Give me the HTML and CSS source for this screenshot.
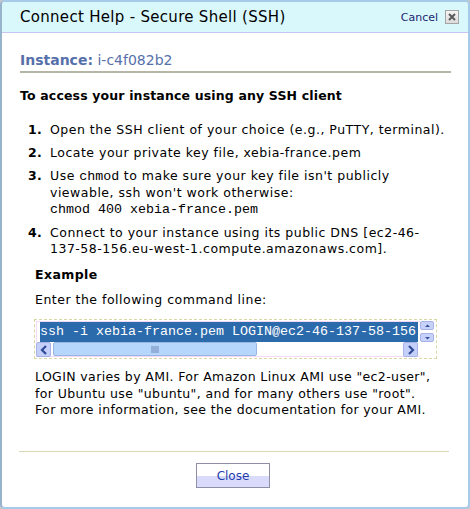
FILE: index.html
```html
<!DOCTYPE html>
<html>
<head>
<meta charset="utf-8">
<link rel="stylesheet" href="styles.css">
</head>
<body>
<div class="dialog">
  <div class="header">
    <h1 class="title">Connect Help - Secure Shell (SSH)</h1>
    <div class="cancel">
      <span class="cancel-text">Cancel</span>
      <span class="xbox"><svg width="10" height="10" viewBox="0 0 10 10"><path d="M2 2 L8 8 M8 2 L2 8" stroke="#5a5a5a" stroke-width="2" fill="none"/></svg></span>
    </div>
  </div>
  <div class="content">
    <div class="instance"><b>Instance:</b> i-c4f082b2</div>
    <h2 class="heading">To access your instance using any SSH client</h2>
    <ol class="steps">
      <li class="step"><span class="num">1.</span><span class="txt">Open the SSH client of your choice (e.g., PuTTY, terminal).</span></li>
      <li class="step"><span class="num">2.</span><span class="txt">Locate your private key file, xebia-france.pem</span></li>
      <li class="step"><span class="num">3.</span><span class="txt">Use <code>chmod</code> to make sure your key file isn't publicly<br>viewable, ssh won't work otherwise:<br><code>chmod 400 xebia-france.pem</code></span></li>
      <li class="step"><span class="num">4.</span><span class="txt">Connect to your instance using its public DNS [ec2-46-<br>137-58-156.eu-west-1.compute.amazonaws.com].</span></li>
    </ol>
    <div class="example">
      <h3 class="ex-title">Example</h3>
      <p class="ex-line">Enter the following command line:</p>
      <div class="cmd">
        <div class="cmd-grid">
          <div class="cmd-text"><span class="sel">ssh -i xebia-france.pem LOGIN@ec2-46-137-58-156</span></div>
          <div class="vscroll">
            <span class="vbtn"><svg width="7" height="4" viewBox="0 0 7 4"><path d="M1 3 L3.5 0.5 L6 3" fill="#3a4f9a"/></svg></span>
            <span class="vbtn"><svg width="7" height="4" viewBox="0 0 7 4"><path d="M1 1 L3.5 3.5 L6 1" fill="#3a4f9a"/></svg></span>
          </div>
          <div class="hscroll">
            <span class="hbtn"><svg width="8" height="10" viewBox="0 0 8 10"><path d="M6 1 L2 5 L6 9" stroke="#2f4b96" stroke-width="2.2" fill="none"/></svg></span>
            <span class="thumb"><svg width="9" height="7" viewBox="0 0 9 7"><path d="M1 0V7M3 0V7M5 0V7M7 0V7" stroke="#7088b8" stroke-width="1"/></svg></span>
            <span class="track"></span>
            <span class="hbtn"><svg width="8" height="10" viewBox="0 0 8 10"><path d="M2 1 L6 5 L2 9" stroke="#2f4b96" stroke-width="2.2" fill="none"/></svg></span>
          </div>
        </div>
      </div>
      <p class="note">LOGIN varies by AMI. For Amazon Linux AMI use "ec2-user",<br>for Ubuntu use "ubuntu", and for many others use "root".<br>For more information, see the documentation for your AMI.</p>
    </div>
  </div>
  <div class="footer">
    <button class="close-btn">Close</button>
  </div>
</div>
</body>
</html>
```

FILE: styles.css
```css
html, body {
  margin: 0;
  padding: 0;
  background: #c4c8cc;
}
body {
  font-family: "DejaVu Sans", Verdana, sans-serif;
  color: #000;
}
.dialog {
  width: 470px;
  height: 509px;
  box-sizing: border-box;
  border: 2px solid #a6cbe8;
  border-left-color: #98b4cc;
  border-radius: 5px;
  background: #fff;
  display: flex;
  flex-direction: column;
  overflow: hidden;
}
.header {
  height: 30px;
  flex: none;
  background: #d9f8fc;
  border-bottom: 1px solid #c6c6f2;
  display: flex;
  align-items: center;
  justify-content: space-between;
  padding: 0 9px 0 18px;
}
.title {
  margin: 0;
  font-size: 15px;
  font-weight: normal;
  line-height: 18px;
  letter-spacing: 0.3px;
}
.cancel {
  display: flex;
  align-items: center;
  gap: 7px;
}
.cancel-text {
  font-size: 11px;
  color: #1a2670;
  letter-spacing: 0;
}
.xbox {
  width: 12px;
  height: 12px;
  border: 1px solid #a4a4a4;
  background: linear-gradient(#f4f4f4, #dcdcdc);
  display: flex;
  align-items: center;
  justify-content: center;
}
.content {
  padding: 0 17px 0 18px;
}
.instance {
  margin-top: 18px;
  font-size: 14px;
  line-height: 18px;
  color: #5670aa;
  padding-bottom: 2px;
  border-bottom: 2px solid #b6b6a8;
}
.heading {
  margin: 15px 0 0;
  font-size: 12.5px;
  font-weight: bold;
  line-height: 16px;
  letter-spacing: 0.15px;
}
.steps {
  list-style: none;
  margin: 18px 0 0;
  padding: 0;
  font-size: 12.5px;
  line-height: 16px;
  letter-spacing: 0.5px;
}
.step {
  display: flex;
  margin-bottom: 7px;
}
.num {
  width: 22px;
  padding-left: 8px;
  flex: none;
  font-weight: bold;
  letter-spacing: 0.2px;
}
code {
  font-family: "Liberation Mono", "Courier New", monospace;
  font-size: 13.33px;
  letter-spacing: 0;
}
.example {
  padding-left: 15px;
  font-size: 12.5px;
  line-height: 16px;
  letter-spacing: 0.5px;
}
.ex-title {
  margin: 10px 0 0;
  font-size: 12.5px;
  font-weight: bold;
  line-height: 16px;
  letter-spacing: 0.4px;
}
.ex-line {
  margin: 9px 0 0;
}
.cmd {
  margin: 11px 0 0 -1px;
  width: 403px;
  height: 40px;
  box-sizing: border-box;
  border: 1px dashed #d8d8a4;
  padding: 1px;
  letter-spacing: 0;
}
.cmd-grid {
  display: grid;
  grid-template-columns: 384px 14px;
  grid-template-rows: 21px 15px;
}
.cmd-text {
  white-space: nowrap;
  overflow: hidden;
  border-top: 1px solid #f4d8f4;
  border-left: 1px solid #f4d8f4;
  box-sizing: border-box;
  padding-left: 3px;
}
.sel {
  display: inline-block;
  background: #2b6aab;
  color: #fff;
  font-family: "Liberation Mono", "Courier New", monospace;
  font-size: 13.33px;
  line-height: 20px;
  padding-right: 2px;
}
.vscroll {
  display: flex;
  flex-direction: column;
  gap: 3px;
}
.vbtn {
  width: 12px;
  height: 7px;
  border: 1px solid #a8b2e6;
  border-radius: 2px;
  background: #c6d2fa;
  display: flex;
  align-items: center;
  justify-content: center;
}
.hscroll {
  display: flex;
  align-items: stretch;
  padding-right: 2px;
  border-bottom: 1px solid #f4d8f4;
}
.hbtn {
  width: 13px;
  height: 13px;
  border: 1px solid #a8b2e6;
  border-radius: 2px;
  background: #c4d0fa;
  display: flex;
  align-items: center;
  justify-content: center;
  flex: none;
}
.thumb {
  margin-left: 2px;
  width: 204px;
  border: 1px solid #98b6e2;
  border-radius: 2px;
  background: #b6d6fb;
  display: flex;
  align-items: center;
  justify-content: center;
  flex: none;
  box-sizing: border-box;
}
.track {
  flex: 1;
}
.note {
  margin: 10px 0 0;
  line-height: 16.5px;
  letter-spacing: 0.38px;
  white-space: nowrap;
}
.footer {
  margin: auto 19px 0 17px;
  border-top: 1px solid #d8d8b6;
  padding: 11px 0 19px;
  display: flex;
  justify-content: center;
}
.close-btn {
  width: 74px;
  height: 25px;
  margin-left: -2px;
  border: 1px solid #8e8ea4;
  background: linear-gradient(#fff 50%, #dadafa 50%);
  color: #1e3eae;
  font-family: "DejaVu Sans", Verdana, sans-serif;
  font-size: 12px;
  padding: 0;
}
```
